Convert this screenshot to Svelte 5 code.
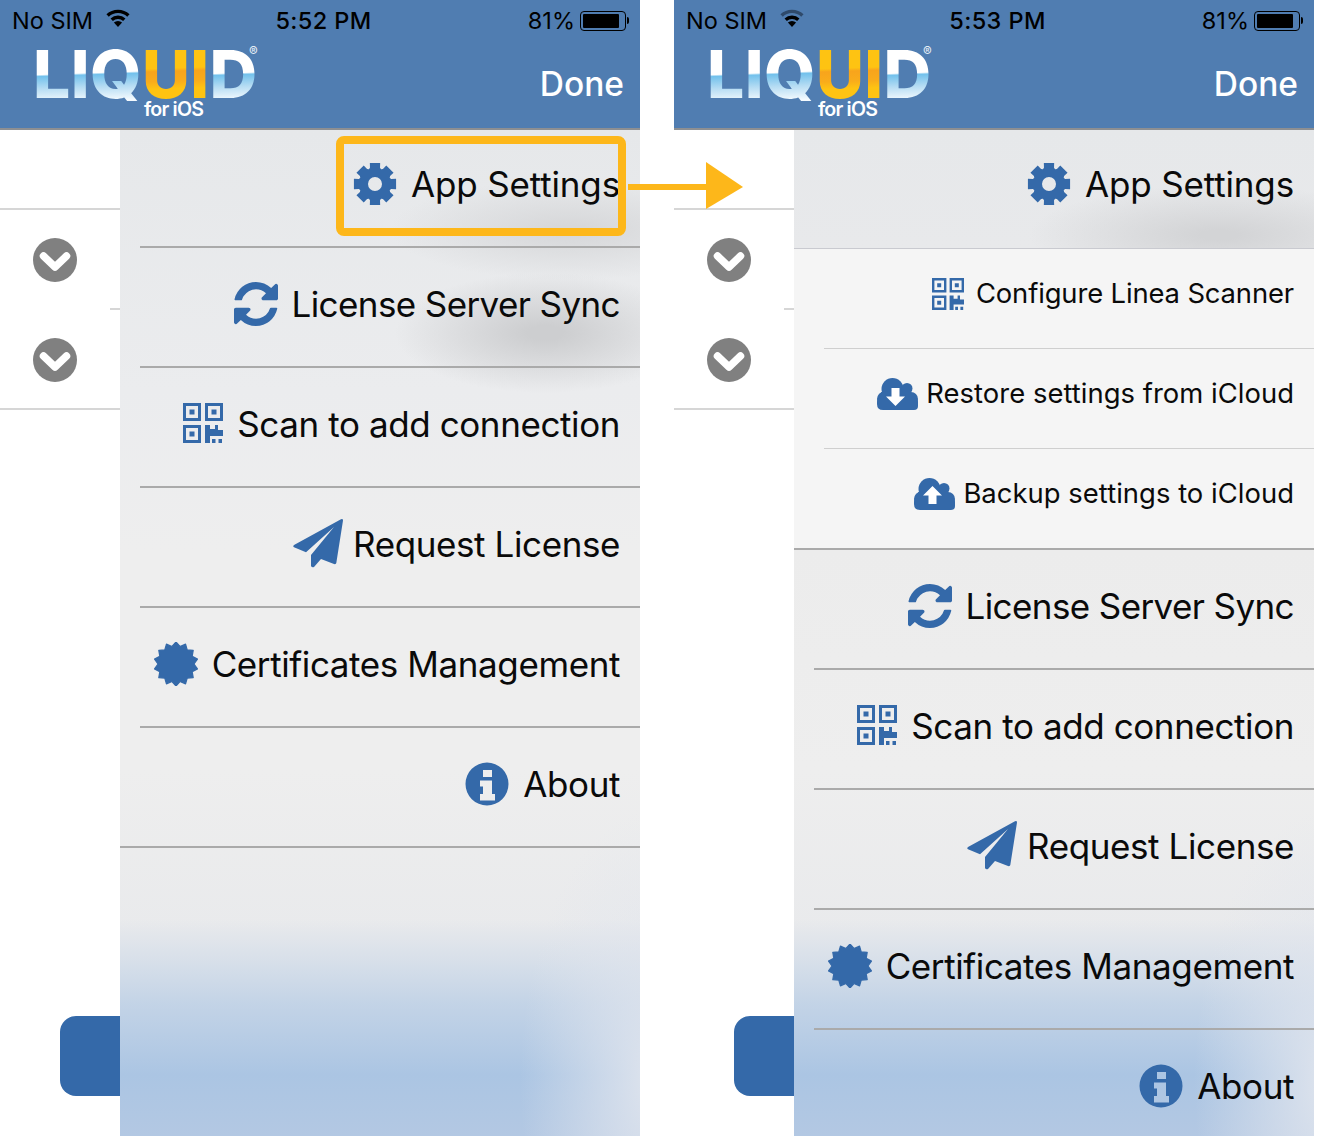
<script>
  function radial(points, rOuter, rInner, c = 22) {
    let d = '';
    const n = points * 2;
    for (let i = 0; i < n; i++) {
      const a = ((i + 1) / n) * Math.PI * 2 - Math.PI / 2;
      const r = i % 2 ? rOuter : rInner;
      d += (i ? 'L' : 'M') + (c + r * Math.cos(a)).toFixed(2) + ' ' + (c + r * Math.sin(a)).toFixed(2);
    }
    return d + 'Z';
  }
  function gear() {
    let d = '';
    const c = 22, teeth = 8, step = (Math.PI * 2) / teeth;
    for (let i = 0; i < teeth; i++) {
      const a = i * step - Math.PI / 2;
      const pts = [
        [16, a - 0.39], [17, a - 0.3], [21.7, a - 0.24], [21.7, a + 0.24], [17, a + 0.3], [16, a + 0.39]
      ];
      for (const [r, t] of pts) {
        d += (d ? 'L' : 'M') + (c + r * Math.cos(t)).toFixed(2) + ' ' + (c + r * Math.sin(t)).toFixed(2);
      }
    }
    return d + 'Z M22 15a7 7 0 1 0 0 14a7 7 0 1 0 0-14Z';
  }
  const gearPath = gear();
  const seal = radial(14, 22, 18);
  const syncPath = 'M1639 1056q0 5-1 7-64 268-268 434.5t-478 166.5q-146 0-282.5-55t-243.5-157l-129 129q-19 19-45 19t-45-19-19-45v-448q0-26 19-45t45-19h448q26 0 45 19t19 45-19 45l-137 137q71 66 161 102t187 36q134 0 250-65t186-179q11-17 53-117 8-23 30-23h192q13 0 22.5 9.5t9.5 22.5zm25-800v448q0 26-19 45t-45 19h-448q-26 0-45-19t-19-45 19-45l138-138q-148-137-349-137-134 0-250 65t-186 179q-11 17-53 117-8 23-30 23h-199q-13 0-22.5-9.5t-9.5-22.5v-7q65-268 270-434.5t480-166.5q146 0 284 55.5t245 156.5l130-129q19-19 45-19t45 19 19 45z';
</script>

{#snippet wifi(dim)}
  <svg class="wifi" width="24" height="19" viewBox="0 0 24 19">
    <path d="M1.6 6.6A15 15 0 0 1 22.4 6.6" class:dimmed={dim} class="arc" />
    <path d="M5.7 10.8A9.2 9.2 0 0 1 18.3 10.8" class="arc" />
    <path d="M12 18L7.9 13.6A6 6 0 0 1 16.1 13.6Z" />
  </svg>
{/snippet}

{#snippet header(time, dim)}
  <header class="header">
    <div class="status">
      <div class="status-left"><span>No SIM</span>{@render wifi(dim)}</div>
      <div class="time">{time}</div>
      <div class="status-right">
        <span>81%</span>
        <span class="battery"><span class="level"></span></span>
        <span class="nub"></span>
      </div>
    </div>
    <div class="nav">
      <div class="logo">
        <span class="blue">LIQ</span><span class="gold">UI</span><span class="blue">D</span>
        <span class="reg">®</span>
        <span class="ios">for iOS</span>
      </div>
      <div class="done">Done</div>
    </div>
  </header>
{/snippet}

{#snippet chevron()}
  <svg width="44" height="44" viewBox="0 0 44 44">
    <circle cx="22" cy="22" r="22" fill="#808080" />
    <path d="M10.500 18L22 29L33.500 18" fill="none" stroke="#fff" stroke-width="7.500" stroke-linecap="round" stroke-linejoin="round" />
  </svg>
{/snippet}

{#snippet side()}
  <aside class="side">
    <div class="cell first line"></div>
    <div class="cell">{@render chevron()}<span class="stub"></span></div>
    <div class="cell line">{@render chevron()}</div>
    <div class="action"></div>
  </aside>
{/snippet}

{#snippet iconGear()}
  <svg class="ic" width="44" height="44" viewBox="0 0 44 44"><path fill-rule="evenodd" d={gearPath} /></svg>
{/snippet}
{#snippet iconSync()}
  <svg class="ic" width="44" height="44" viewBox="128 128 1536 1536"><path d={syncPath} /></svg>
{/snippet}
{#snippet iconQr(s)}
  <svg class="ic lift" width={s} height={s} viewBox="0 0 40 40">
    <path fill-rule="evenodd" d="M0 0h18v18H0zM3 3v12h12V3zM6.500 6.500h5v5h-5zM22 0h18v18H22zM25 3v12h12V3zM28.500 6.500h5v5h-5zM0 22h18v18H0zM3 25v12h12V25zM6.500 28.500h5v5h-5z" />
    <path d="M22 22h5v4h5v-4h3v5h5v6H27v7h-5zM29 36h3.500v4H29zM35.500 36H39v4h-3.500z" />
  </svg>
{/snippet}
{#snippet iconPlane()}
  <svg class="ic lift" width="50" height="50" viewBox="0 0 50 50">
    <path d="M48 1.300L1 27Q-.5 28.500 1 29.300L13 34.300L41 9L18 37V48Q19 50 21 49L28 41L41 46Q43 46.500 43.300 45L50 2.500Q50 .5 48 1.300Z" />
  </svg>
{/snippet}
{#snippet iconSeal()}
  <svg class="ic" width="44" height="44" viewBox="0 0 44 44"><path d={seal} stroke="#3469a9" stroke-width="1.200" stroke-linejoin="round" /></svg>
{/snippet}
{#snippet iconInfo()}
  <svg class="ic" width="44" height="44" viewBox="0 0 44 44">
    <path fill-rule="evenodd" d="M22 .5a21.500 21.500 0 1 0 0 43a21.500 21.500 0 1 0 0-43ZM18 8h9v7h-9ZM15 18.500h12V32h3v6.500H15V32h3v-7.500h-3Z" />
  </svg>
{/snippet}
{#snippet iconCloud(up)}
  <svg class="ic" width="41" height="32" viewBox="0 0 41 32">
    <circle cx="15.500" cy="11" r="11" />
    <circle cx="30" cy="10.500" r="5.500" />
    <circle cx="7.500" cy="21" r="7.500" />
    <circle cx="34" cy="21" r="7" />
    <path d="M4 20H37Q41 20 41 24V28Q41 32 37 32H6Q0 32 0 26V24Q0 20 4 20Z" />
    <path d="M4 14h30v10H4z" />
    {#if up}
      <path fill="#fff" d="M18.500 8L28 17.500H22.500V26H14.500V17.500H9Z" />
    {:else}
      <path fill="#fff" d="M14.500 10H22.500V18.500H28L18.500 28L9 18.500H14.500Z" />
    {/if}
  </svg>
{/snippet}

{#snippet row(icon, label, cls = '')}
  <div class="row {cls}">
    {@render icon()}
    <span class="label">{label}</span>
  </div>
{/snippet}

{#snippet qr40()}{@render iconQr(40)}{/snippet}
{#snippet qr32()}{@render iconQr(32)}{/snippet}
{#snippet cloudDown()}{@render iconCloud(false)}{/snippet}
{#snippet cloudUp()}{@render iconCloud(true)}{/snippet}

<div class="page">
  <section class="phone phone-a">
    {@render header('5:52 PM', false)}
    <div class="body">
      {@render side()}
      <nav class="menu menu-a">
        {@render row(iconGear, 'App Settings', 'top wide')}
        {@render row(iconSync, 'License Server Sync', 'tight')}
        {@render row(qr40, 'Scan to add connection')}
        {@render row(iconPlane, 'Request License', 'plane')}
        {@render row(iconSeal, 'Certificates Management')}
        {@render row(iconInfo, 'About', 'end')}
      </nav>
    </div>
    <div class="callout"></div>
    <svg class="arrow" width="118" height="50" viewBox="0 0 118 50">
      <rect x="0" y="22" width="80" height="6" fill="#fdb71a" />
      <path d="M78 0L115 25L78 47Z" fill="#fdb71a" />
    </svg>
  </section>

  <section class="phone">
    {@render header('5:53 PM', true)}
    <div class="body">
      {@render side()}
      <nav class="menu menu-b">
        {@render row(iconGear, 'App Settings', 'top-b wide')}
        <div class="group">
          {@render row(qr32, 'Configure Linea Scanner', 'sub conf')}
          {@render row(cloudDown, 'Restore settings from iCloud', 'sub cloud')}
          {@render row(cloudUp, 'Backup settings to iCloud', 'sub cloud last')}
        </div>
        {@render row(iconSync, 'License Server Sync', 'tight')}
        {@render row(qr40, 'Scan to add connection')}
        {@render row(iconPlane, 'Request License', 'plane')}
        {@render row(iconSeal, 'Certificates Management')}
        {@render row(iconInfo, 'About', 'tail')}
      </nav>
    </div>
  </section>
</div>

<style>
  :global(body) {
    margin: 0;
    background: #fff;
  }
  .page {
    display: flex;
    gap: 34px;
    width: 1318px;
    height: 1136px;
    overflow: hidden;
    font-family: Inter, "Liberation Sans", sans-serif;
  }
  .phone {
    position: relative;
    width: 640px;
    height: 1136px;
    flex: none;
  }
  .phone-a {
    z-index: 1;
  }
  .header {
    height: 128px;
    background: #507db1;
    border-bottom: 2px solid #8d8f92;
  }
  .status {
    height: 41px;
    display: grid;
    grid-template-columns: 1fr auto 1fr;
    align-items: center;
    padding: 0 11px 0 12px;
    font-size: 23.5px;
    color: #000;
  }
  .status-left {
    display: flex;
    align-items: center;
    gap: 13px;
  }
  .wifi {
    margin-top: -4px;
    fill: #000;
  }
  .arc {
    fill: none;
    stroke: #000;
    stroke-width: 3.4;
  }
  .dimmed {
    stroke: #2f4a6b;
  }
  .time {
    font-weight: 500;
    letter-spacing: 0.4px;
    margin-left: 6px;
  }
  .status-right {
    display: flex;
    align-items: center;
    justify-content: flex-end;
  }
  .battery {
    margin-left: 5px;
    width: 46px;
    height: 20px;
    box-sizing: border-box;
    border: 1px solid #000;
    border-radius: 4px;
    padding: 2px;
    display: flex;
  }
  .level {
    width: 36px;
    background: #000;
    border-radius: 1px;
  }
  .nub {
    width: 2px;
    height: 7px;
    background: #000;
    border-radius: 0 2px 2px 0;
    margin-left: 1px;
  }
  .nav {
    display: flex;
    justify-content: space-between;
    align-items: flex-start;
    padding: 0 16px 0 33px;
  }
  .logo {
    position: relative;
    display: flex;
    font-size: 66px;
    font-weight: 800;
    line-height: 66px;
    height: 60px;
    letter-spacing: 0.4px;
  }
  .blue,
  .gold {
    display: block;
    height: 60px;
    background-clip: text;
    -webkit-background-clip: text;
    color: transparent;
  }
  .blue {
    background-image: linear-gradient(178deg, #fff 0 53%, #72c1ec 56%, #b5dcf3 75%, #f4fafe 97%);
  }
  .gold {
    background-image: linear-gradient(178deg, #fec312 0 45%, #f8a41c 50%, #f9ac1b 66%, #fec312 78%);
  }
  .reg {
    position: absolute;
    left: 216px;
    top: 3px;
    font-size: 13px;
    line-height: 15px;
    font-weight: 400;
    color: #e6eef6;
  }
  .ios {
    position: absolute;
    left: 111px;
    top: 60px;
    font-size: 19.6px;
    line-height: 16px;
    font-weight: 600;
    letter-spacing: -0.8px;
    color: #fff;
  }
  .done {
    font-size: 33.5px;
    line-height: 40px;
    font-weight: 500;
    color: #fff;
    margin-top: 23px;
  }
  .body {
    display: flex;
    height: 1006px;
  }
  .side {
    width: 120px;
    flex: none;
    background: #fff;
  }
  .cell {
    position: relative;
    height: 100px;
    box-sizing: border-box;
    padding-left: 33px;
    display: flex;
    align-items: center;
  }
  .cell.first {
    height: 80px;
  }
  .line {
    border-bottom: 2px solid #d6d6d6;
  }
  .cell.line:not(.first) svg {
    margin-top: 2px;
  }
  .stub {
    position: absolute;
    right: 0;
    bottom: 0;
    width: 10px;
    height: 2px;
    background: #d6d6d6;
  }
  .action {
    width: 60px;
    height: 80px;
    margin: 606px 0 0 60px;
    background: #3469a9;
    border-radius: 16px 0 0 16px;
  }
  .menu {
    flex: 1;
    min-width: 0;
    overflow: hidden;
  }
  .menu-a {
    background:
      radial-gradient(ellipse 135px 270px at 535px 950px, rgba(226, 230, 238, 0.95), rgba(226, 230, 238, 0) 100%),
      linear-gradient(rgba(171, 197, 227, 0) 790px, rgba(171, 197, 227, 0.28) 830px, rgba(171, 197, 227, 0.62) 875px, #abc5e3 945px, #b3c8e3 1006px),
      radial-gradient(ellipse 150px 60px at 425px 203px, #cdced0 12%, rgba(205, 206, 208, 0) 100%),
      radial-gradient(ellipse 180px 50px at 450px 100px, #d7d8da 10%, rgba(215, 216, 218, 0) 100%),
      linear-gradient(#e6e8ea 0, #ebecee 260px, #eeeeee 420px, #eeeeee 640px, #e9eaec 800px);
  }
  .menu-b {
    background:
      radial-gradient(ellipse 135px 270px at 535px 950px, rgba(226, 230, 238, 0.95), rgba(226, 230, 238, 0) 100%),
      linear-gradient(rgba(171, 197, 227, 0) 790px, rgba(171, 197, 227, 0.28) 830px, rgba(171, 197, 227, 0.62) 875px, #abc5e3 945px, #b3c8e3 1006px),
      radial-gradient(ellipse 190px 50px at 425px 105px, #d3d4d6 10%, rgba(211, 212, 214, 0) 100%),
      linear-gradient(#e6e8ea 0, #e8e9eb 118px, #ececec 420px, #eeeeee 640px, #e9eaec 800px);
  }
  .row {
    display: flex;
    justify-content: flex-end;
    align-items: center;
    gap: 14px;
    height: 120px;
    box-sizing: border-box;
    margin-left: 20px;
    padding: 0 20px 6px 0;
    border-bottom: 2px solid #aaa;
  }
  .row.top {
    height: 118px;
    padding-bottom: 8px;
  }
  .row.top-b {
    height: 119px;
    margin-left: 0;
    padding-bottom: 11px;
    border-bottom: 1px solid #c9cad0;
  }
  .row.end {
    margin-left: 0;
  }
  .row.tail {
    border-bottom: 0;
    padding-bottom: 8px;
  }
  .row.plane {
    gap: 10px;
  }
  .group {
    background: #f5f5f5;
    border-bottom: 2px solid #aaa;
  }
  .row.sub {
    height: 100px;
    margin-left: 30px;
    gap: 12px;
    padding-bottom: 9px;
    border-bottom: 1px solid #cfcfcf;
  }
  .row.sub.cloud {
    gap: 8px;
  }
  .row.sub.last {
    height: 99px;
    border-bottom: 0;
  }
  .ic {
    flex: none;
    fill: #3469a9;
    display: block;
  }
  .row:not(.sub) .lift {
    margin-top: -2px;
  }
  .label {
    font-size: 35px;
    letter-spacing: -0.4px;
    line-height: 44px;
    color: #0a0a0a;
    white-space: nowrap;
  }
  .wide .label {
    letter-spacing: -0.15px;
  }
  .tight .label {
    letter-spacing: -0.6px;
  }
  .sub .label {
    font-size: 27.4px;
    margin-bottom: 2px;
    letter-spacing: 0.04px;
  }
  .conf .label {
    letter-spacing: -0.13px;
  }
  .callout {
    position: absolute;
    left: 336px;
    top: 136px;
    width: 290px;
    height: 100px;
    box-sizing: border-box;
    border: 8px solid #fdb71a;
    border-radius: 8px;
  }
  .arrow {
    position: absolute;
    left: 628px;
    top: 162px;
  }
</style>
